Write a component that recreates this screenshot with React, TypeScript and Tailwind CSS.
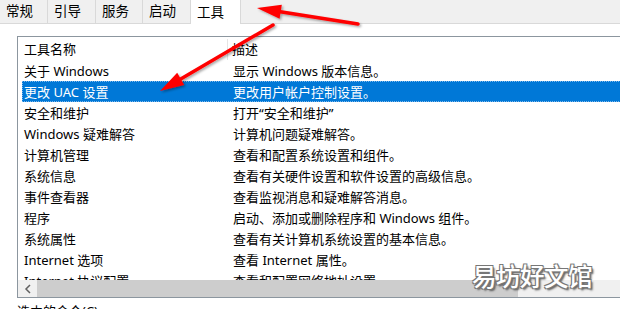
import React from 'react'

const font = { fontFamily: '"Segoe UI", "Noto Sans", "Noto Sans CJK SC", sans-serif' }

const tabs = [
  { label: '常规', w: 'w-[48px]' },
  { label: '引导', w: 'w-[48px]' },
  { label: '服务', w: 'w-[47px]' },
  { label: '启动', w: 'w-[48px]' },
]

const rows: [string, string][] = [
  ['关于 Windows', '显示 Windows 版本信息。'],
  ['更改 UAC 设置', '更改用户帐户控制设置。'],
  ['安全和维护', '打开“安全和维护”'],
  ['Windows 疑难解答', '计算机问题疑难解答。'],
  ['计算机管理', '查看和配置系统设置和组件。'],
  ['系统信息', '查看有关硬件设置和软件设置的高级信息。'],
  ['事件查看器', '查看监视消息和疑难解答消息。'],
  ['程序', '启动、添加或删除程序和 Windows 组件。'],
  ['系统属性', '查看有关计算机系统设置的基本信息。'],
  ['Internet 选项', '查看 Internet 属性。'],
  ['Internet 协议配置', '查看和配置网络地址设置。'],
]

// red annotation arrow, tip at (x2, y2)
function Arrow({ x1, y1, x2, y2 }: { x1: number; y1: number; x2: number; y2: number }) {
  const dx = x2 - x1
  const dy = y2 - y1
  const len = Math.hypot(dx, dy)
  const ux = dx / len
  const uy = dy / len
  const hl = 24
  const hw = 7
  const bx = x2 - ux * hl
  const by = y2 - uy * hl
  const pts = `${x2},${y2} ${bx - uy * hw},${by + ux * hw} ${bx + uy * hw},${by - ux * hw}`
  return (
    <g>
      <line x1={x1} y1={y1} x2={bx + ux * 2} y2={by + uy * 2} stroke="#ff0000" strokeWidth={3.5} strokeLinecap="round" />
      <polygon points={pts} fill="#ff0000" />
    </g>
  )
}

export default function App() {
  return (
    <div className="relative w-[620px] h-[309px] overflow-hidden bg-white text-black" style={font}>
      {/* Tab strip */}
      <div className="flex h-[24px] bg-[#f0f0f0] border-b border-[#d9d9d9]">
        {tabs.map((t) => (
          <div key={t.label} className={`${t.w} h-[23px] pl-[6px] border-r border-[#d9d9d9] text-[13.5px] leading-[23px]`}>
            {t.label}
          </div>
        ))}
        <div className="w-[50px] h-[24px] -mb-px pl-[6px] bg-white border-r border-[#d9d9d9] text-[13.5px] leading-[24px]">
          工具
        </div>
      </div>

      {/* List view */}
      <div className="pl-[17px] pt-[12px]">
        <div className="w-[640px] border-l border-t border-b border-[#8c969f] text-[13px]">
          <div className="flex h-[23px] pt-[2px] items-center">
            <div className="w-[210px] pl-[6px] border-r border-[#e5e5e5] leading-[21px]">工具名称</div>
            <div className="pl-[4px]">描述</div>
          </div>
          <div className="h-[220px] overflow-hidden pl-[4px]">
            {rows.map(([name, desc], i) => {
              const sel = i === 1
              return (
                <div
                  key={name}
                  className={
                    sel
                      ? 'flex h-[21px] pt-[2px] items-center bg-[#0078d7] text-white outline-1 outline-dotted outline-[#7fb8eb] -outline-offset-1'
                      : 'flex h-[21px] pt-[2px] items-center'
                  }
                >
                  <div className="w-[206px] pl-[2px] whitespace-nowrap">{name}</div>
                  <div className="pl-[5px] whitespace-nowrap">{desc}</div>
                </div>
              )
            })}
          </div>
          {/* horizontal scrollbar */}
          <div className="flex h-[17px] bg-[#f0f0f0]">
            <div className="w-[19px] flex items-center justify-center">
              <svg width="8" height="10" viewBox="0 0 8 10">
                <path d="M6 1 L2 5 L6 9" fill="none" stroke="#606060" strokeWidth="1.5" />
              </svg>
            </div>
            <div className="w-[481px] bg-[#cdcdcd]" />
          </div>
        </div>
        <div className="mt-[5px] text-[13px] leading-[16px]">选中的命令(C):</div>
      </div>

      {/* watermark */}
      <div
        className="absolute left-[472px] top-[261px] text-[24.5px] leading-[30px] font-medium text-white tracking-[-0.5px] [text-shadow:1px_1px_0_#777,-1px_-1px_0_#777,1px_-1px_0_#777,-1px_1px_0_#777,2px_2px_2px_#555]"
        style={{ fontFamily: '"Noto Sans CJK SC", sans-serif' }}
      >
        易坊好文馆
      </div>

      {/* red arrows */}
      <svg className="absolute inset-0 pointer-events-none" width="620" height="309">
        <defs>
          <filter id="sh" x="-10%" y="-10%" width="130%" height="130%">
            <feDropShadow dx="1.5" dy="1.5" stdDeviation="1.2" floodColor="#000" floodOpacity="0.35" />
          </filter>
        </defs>
        <g filter="url(#sh)">
          <Arrow x1={358} y1={24} x2={257} y2={8} />
          <Arrow x1={273} y1={25} x2={160} y2={91} />
        </g>
      </svg>
    </div>
  )
}
